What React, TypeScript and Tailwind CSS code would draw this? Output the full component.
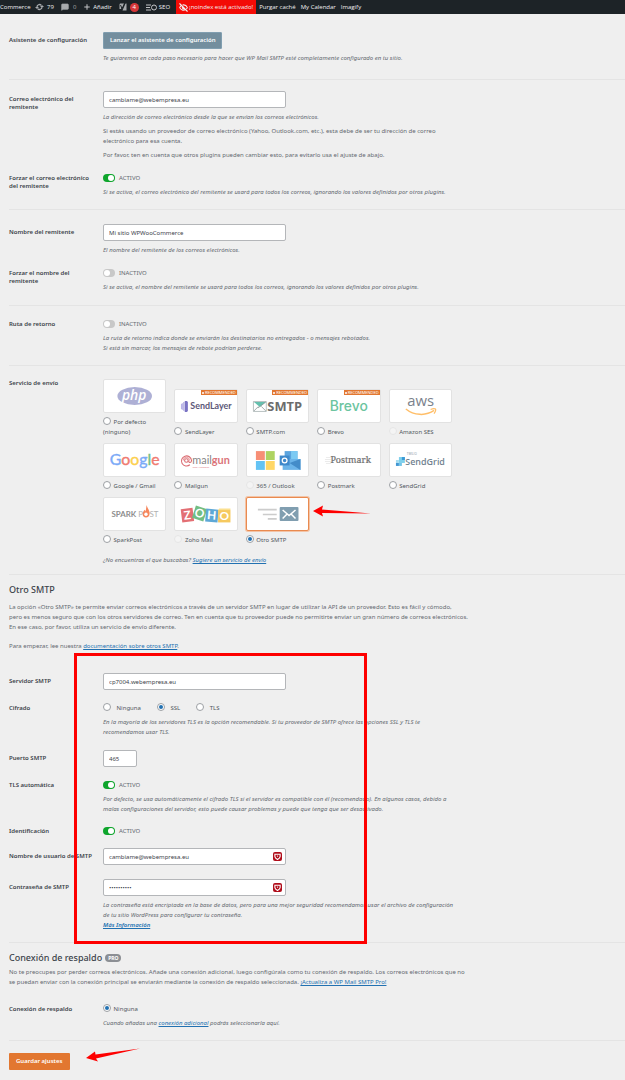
import { ReactNode } from 'react';
import { EyeOff, MessageSquare, Plus, Shield } from 'lucide-react';

interface RowProps {
  label: string;
  htmlFor?: string;
  className?: string;
  labelClass?: string;
  children: ReactNode;
}

function Row({ label, htmlFor, className = '', labelClass = '', children }: RowProps) {
  const text = `block max-w-[90px] font-semibold leading-[8px] text-[#3c434a] ${labelClass}`;

  return (
    <div className={`grid grid-cols-[94px_1fr] ${className}`}>
      <div>
        {htmlFor ? (
          <label htmlFor={htmlFor} className={text}>
            {label}
          </label>
        ) : (
          <span className={text}>{label}</span>
        )}
      </div>
      <div className="min-w-0">{children}</div>
    </div>
  );
}

function Desc({ children, className = 'mt-1' }: { children: ReactNode; className?: string }) {
  return <p className={`italic leading-[10px] text-[#646970] ${className}`}>{children}</p>;
}

function Link({ children }: { children: ReactNode }) {
  return (
    <a href="#" className="text-[#2271b1] underline">
      {children}
    </a>
  );
}

interface FieldProps {
  id: string;
  value: string;
  type?: string;
  width?: string;
  shield?: boolean;
}

function Field({ id, value, type = 'text', width = 'w-[183px]', shield }: FieldProps) {
  return (
    <div className={`relative ${width}`}>
      <input
        id={id}
        type={type}
        defaultValue={value}
        className="block h-[17px] w-full rounded-[2px] border border-[#b4b6b9] bg-white px-[5px] text-[#3c434a] outline-none"
      />
      {shield && (
        <span className="absolute right-1 top-1 flex size-[9px] items-center justify-center rounded-[2px] bg-[#b00d1b] text-white">
          <svg viewBox="0 0 16 16" className="size-[7px]" aria-hidden="true">
            <path d="M2 3h12v5c0 3-2.500 5-6 7-3.500-2-6-4-6-7z" fill="none" stroke="currentColor" strokeWidth="2.500" />
            <circle cx="8" cy="7" r="1.500" fill="currentColor" />
          </svg>
        </span>
      )}
    </div>
  );
}

function Toggle({ id, on }: { id: string; on?: boolean }) {
  return (
    <div className="flex h-2 items-center gap-1">
      <input
        id={id}
        type="checkbox"
        role="switch"
        defaultChecked={on}
        className="h-2 w-[12px] shrink-0 appearance-none rounded-full bg-[#c8c8c8] p-px before:block before:size-[6px] before:rounded-full before:bg-white checked:bg-[#0ea52c] checked:before:ml-[4px]"
      />
      <label htmlFor={id} className="leading-[8px] text-[#646970]">
        {on ? 'ACTIVO' : 'INACTIVO'}
      </label>
    </div>
  );
}

interface RadioProps {
  name: string;
  label: string;
  checked?: boolean;
  disabled?: boolean;
  inputClass?: string;
}

function Radio({ name, label, checked, disabled, inputClass = 'mr-px' }: RadioProps) {
  return (
    <label className="leading-[10px] text-[#50575e]">
      <input
        type="radio"
        name={name}
        defaultChecked={checked}
        disabled={disabled}
        className={`inline-block size-2 appearance-none rounded-full border border-[#9da0a4] bg-white p-px align-[-1px] before:block before:size-1 before:rounded-full checked:before:bg-[#2271b1] disabled:border-[#e6e6e6] disabled:bg-[#f4f4f4] ${inputClass}`}
      />{' '}
      {label}
    </label>
  );
}

const logos: Record<string, ReactNode> = {
  php: (
    <>
      <ellipse cx="31" cy="16" rx="17.5" ry="9" fill="#aeb0d5" />
      <text x="30.500" y="20" textAnchor="middle" fontSize="14" fontWeight="600" fontStyle="italic" fill="#fff" fontFamily="Open Sans, sans-serif">
        php
      </text>
    </>
  ),
  sendlayer: (
    <>
      <path d="M6 14l2-1v7l-2-1z" fill="#b9b5e8" />
      <path d="M8.500 12.500l1-1v10l-1-1z" fill="#8f89d4" />
      <path d="M10 11h2l1 1v9l-1 1h-2z" fill="#7a73c4" />
      <text x="15.500" y="19.500" fontSize="9" fontWeight="700" fill="#5d5878" fontFamily="Lato, sans-serif">
        SendLayer
      </text>
    </>
  ),
  smtp: (
    <>
      <path d="M6.500 11.500h13v10h-13z" fill="#fff" stroke="#9aa5a5" strokeWidth=".7" />
      <path d="M7 12h12l-6 5z" fill="#65c0ae" />
      <path d="M7 21l4.500-4.500M19 21l-4.500-4.500M19 12l-8 6" fill="none" stroke="#8b9797" strokeWidth=".8" />
      <text x="20.500" y="21" fontSize="13" fontWeight="700" fill="#6c6c6c" fontFamily="Open Sans, sans-serif">
        SMTP
      </text>
    </>
  ),
  brevo: (
    <text x="31" y="21" textAnchor="middle" fontSize="14" fontWeight="500" fill="#6cc4a0" fontFamily="Inter, sans-serif">
      Brevo
    </text>
  ),
  aws: (
    <>
      <text x="31" y="16.500" textAnchor="middle" fontSize="15" fontWeight="500" fill="#7b828c" fontFamily="Open Sans, sans-serif">
        aws
      </text>
      <path d="M16 19c8 6.500 20 7.500 28.500 1.500" fill="none" stroke="#ffbe68" strokeWidth="1.500" />
      <path d="M41 19.500c2-.9 4.200-1 5-.4.4 1-.3 3-1.600 4.500" fill="none" stroke="#ffbe68" strokeWidth="1.200" />
    </>
  ),
  google: (
    <text x="31" y="21" textAnchor="middle" fontSize="16" fontWeight="400" strokeWidth=".4" fontFamily="Lato, sans-serif">
      <tspan fill="#7baaf7" stroke="#7baaf7">G</tspan>
      <tspan fill="#f07b72" stroke="#f07b72">o</tspan>
      <tspan fill="#fcd04f" stroke="#fcd04f">o</tspan>
      <tspan fill="#7baaf7" stroke="#7baaf7">g</tspan>
      <tspan fill="#71c287" stroke="#71c287">l</tspan>
      <tspan fill="#f07b72" stroke="#f07b72">e</tspan>
    </text>
  ),
  mailgun: (
    <>
      <circle cx="11.500" cy="16.500" r="1.800" fill="none" stroke="#db6b71" strokeWidth="1.100" />
      <path d="M15 20.800a5.100 5.100 0 1 1 1.700-4.300c0 2.600-2.900 2.600-2.900.2" fill="none" stroke="#db6b71" strokeWidth="1.100" />
      <path d="M8.300 16.500a3.200 3.200 0 0 1 6.400 0" fill="none" stroke="#db6b71" strokeWidth=".7" />
      <text x="17.500" y="20" fontSize="11" fill="#858585" fontFamily="Lato, sans-serif">
        mail<tspan fontWeight="700" fill="#db7479">gun</tspan>
      </text>
      <text x="18" y="24.500" fontSize="2" fill="#db6b71" fontFamily="Open Sans, sans-serif">
        Email Automation
      </text>
    </>
  ),
  outlook: (
    <>
      <path d="M9 7h9v9H9z" fill="#f78f76" />
      <path d="M19 7h9v9h-9z" fill="#aed361" />
      <path d="M9 17h9v9H9z" fill="#64c3f4" />
      <path d="M19 17h9v9h-9z" fill="#ffd766" />
      <path d="M38 7h13v9H38z" fill="#5ba4de" />
      <path d="M44.500 7H51v9h-6.500z" fill="#7ccaf3" />
      <path d="M36 15h18v11H36z" fill="#6bb4e9" />
      <path d="M54 15v11L43 19z" fill="#438cc9" />
      <path d="M33 11.500h10v10H33z" fill="#3f89cb" />
      <circle cx="38" cy="16.500" r="2.400" fill="none" stroke="#fff" strokeWidth="1.300" />
    </>
  ),
  postmark: (
    <>
      <path d="M8 13.500h5M7 15.500h6M7 17.500h6M8 19.500h5" stroke="#e6e6e6" strokeWidth=".8" />
      <text x="12.500" y="19.500" fontSize="9" fill="#6f6f6f" stroke="#6f6f6f" strokeWidth=".2" fontFamily="Noto Serif, DejaVu Serif, Liberation Serif, serif">
        Postmark
      </text>
    </>
  ),
  sendgrid: (
    <>
      <path d="M9 13h6v6H9z" fill="#7fd0ec" />
      <path d="M12 13h3v3h-3z" fill="#3b9ad6" />
      <path d="M6 16h3v3H6z" fill="#a6dcef" />
      <path d="M6 19h3v3H6z" fill="#4196d3" />
      <path d="M9 19h3v3H9z" fill="#73c4e8" />
      <text x="17" y="10.500" fontSize="3" fill="#84919c" fontFamily="Open Sans, sans-serif">
        TWILIO
      </text>
      <text x="15.500" y="21.500" fontSize="9" fontWeight="600" fill="#71828f" fontFamily="Open Sans, sans-serif">
        SendGrid
      </text>
    </>
  ),
  sparkpost: (
    <>
      <text x="7.500" y="19.500" fontSize="8" fontWeight="700" fill="#8d8d8d" fontFamily="Lato, sans-serif">
        SPARK
      </text>
      <text x="34.500" y="19.500" fontSize="8" fill="#b0b0b0" fontFamily="Lato, sans-serif">
        P
      </text>
      <text x="46" y="19.500" fontSize="8" fill="#b0b0b0" fontFamily="Lato, sans-serif">
        ST
      </text>
      <path d="M43 7c.5 2.500 2.500 4.500 3 7.500.4 3-1.200 5-3.600 5s-3.800-2-3.300-4.500c.4-1.600 1.400-2 1.700-3.300.7.500.9 1 1 1.700.9-2 .8-4.400 1.200-6.400z" fill="#f6875c" />
      <circle cx="42.400" cy="16.300" r="1.700" fill="#fff" />
    </>
  ),
  zoho: (
    <>
      <g transform="rotate(-7 12 17)">
        <path d="M6.500 10.500H18.500v13.500H6.500z" fill="#e36f74" />
        <text x="12.500" y="21.500" textAnchor="middle" fontSize="12" fontWeight="700" fill="#fff" fontFamily="Lato, sans-serif">Z</text>
      </g>
      <g transform="rotate(18 25 15)">
        <path d="M19 9H31v13H19z" fill="#72bd83" />
        <text x="25" y="19.500" textAnchor="middle" fontSize="12" fontWeight="700" fill="#fff" fontFamily="Lato, sans-serif">O</text>
      </g>
      <g transform="rotate(5 37 17)">
        <path d="M31 11H43.500v13H31z" fill="#5ea8d6" />
        <text x="37" y="21.500" textAnchor="middle" fontSize="12" fontWeight="700" fill="#fff" fontFamily="Lato, sans-serif">H</text>
      </g>
      <path d="M43.500 12H56V24.500H43.500z" fill="#f6c95f" />
      <path d="M43.500 12l1.200-1.500H56V12z" fill="#fbe08f" />
      <text x="49.700" y="22.500" textAnchor="middle" fontSize="12" fontWeight="700" fill="#fff" fontFamily="Lato, sans-serif">O</text>
    </>
  ),
  other: (
    <>
      <path d="M11 11.500h19M16 16.500h14M21 21h9" stroke="#cccccc" strokeWidth="1.700" />
      <rect x="33" y="9" width="19" height="14" rx="1" fill="#809eb0" />
      <path d="M36 12l6.500 5.500L49 12M36 20.500l4.500-4.500M49 20.500L44.500 16" fill="none" stroke="#fff" strokeWidth="1.500" />
    </>
  ),
};

const mailers = [
  { logo: 'php', label: 'Por defecto (ninguno)' },
  { logo: 'sendlayer', label: 'SendLayer', recommended: true },
  { logo: 'smtp', label: 'SMTP.com', recommended: true },
  { logo: 'brevo', label: 'Brevo', recommended: true },
  { logo: 'aws', label: 'Amazon SES', disabled: true },
  { logo: 'google', label: 'Google / Gmail' },
  { logo: 'mailgun', label: 'Mailgun' },
  { logo: 'outlook', label: '365 / Outlook', disabled: true },
  { logo: 'postmark', label: 'Postmark' },
  { logo: 'sendgrid', label: 'SendGrid' },
  { logo: 'sparkpost', label: 'SparkPost' },
  { logo: 'zoho', label: 'Zoho Mail', disabled: true },
  { logo: 'other', label: 'Otro SMTP', selected: true },
];

function MailerGrid() {
  return (
    <div className="grid w-[349px] grid-cols-5 items-end gap-x-2 gap-y-[6px]">
      {mailers.map((mailer) => (
        <div key={mailer.logo} className="flex flex-col gap-1">
          <div
            className={`relative h-[34px] rounded-[2px] border bg-white ${
              mailer.selected ? 'border-[#e98a50] ring-1 ring-[#f3c4a6]' : 'border-[#e2e2e2]'
            }`}
          >
            <svg viewBox="0 0 62 32" className="size-full" aria-hidden="true">
              {logos[mailer.logo]}
            </svg>
            {mailer.recommended && (
              <span className="absolute right-0 top-0 flex h-[5px] items-center gap-px bg-[#e27730] px-px text-[4px] leading-[5px] text-white">
                <span className="size-[2px] rounded-full bg-white" />
                RECOMMENDED
              </span>
            )}
          </div>
          <Radio name="mailer" label={mailer.label} checked={mailer.selected} disabled={mailer.disabled} />
        </div>
      ))}
    </div>
  );
}

function AdminBar() {
  return (
    <nav className="flex h-[14px] items-center overflow-hidden whitespace-nowrap bg-[#1d2327] font-['Open_Sans','Noto_Sans',sans-serif] leading-[14px] text-[#f0f0f1]">
      <a href="#" className="w-[28px]">Commerce</a>
      <a href="#" className="ml-[7px] flex items-center gap-[3px]">
        <svg viewBox="0 0 18 16" className="h-2 w-[9px]" aria-hidden="true">
          <path d="M4 8a5 5 0 0 1 8.500-3.500M14 8a5 5 0 0 1-8.500 3.500" fill="none" stroke="#a7aaad" strokeWidth="2.500" />
          <path d="M0 8h8L4 12zM10 8h8l-4-4z" fill="#a7aaad" />
        </svg>
        79
      </a>
      <a href="#" className="ml-[7px] flex items-center gap-1 text-[#a7aaad]">
        <MessageSquare size={8} fill="currentColor" />
        0
      </a>
      <a href="#" className="ml-[7px] flex items-center gap-[2px]">
        <Plus size={8} strokeWidth={3} className="text-[#c3c4c7]" />
        Añadir
      </a>
      <a href="#" className="ml-[7px] flex items-center gap-[3px]">
        <svg viewBox="0 0 16 16" className="size-2" aria-label="Yoast">
          <path d="M2 1h8L6 12H1V3zM13 1h2v14H7z" fill="#a7aaad" />
          <path d="M3 4l3 7 6-11M6 10l-2 4" fill="none" stroke="#1d2327" strokeWidth="2" />
        </svg>
        <span className="flex size-[9px] items-center justify-center rounded-full bg-[#d63638] text-white">4</span>
      </a>
      <a href="#" className="ml-[7px] flex items-center gap-[2px]">
        <svg viewBox="0 0 22 14" className="h-[7px] w-[11px]" aria-hidden="true">
          <path d="M0 2h10M0 7h8M0 12h10" stroke="#c3c4c7" strokeWidth="2" />
          <circle cx="16" cy="7" r="5" fill="none" stroke="#c3c4c7" strokeWidth="2" />
        </svg>
        SEO
      </a>
      <a href="#" className="ml-[6px] flex h-full items-center gap-px bg-[#f30b06] px-[3px]">
        <EyeOff size={9} strokeWidth={3} />
        ¡noindex está activado!
      </a>
      <a href="#" className="ml-[3px]">Purgar caché</a>
      <a href="#" className="ml-[5px]">My Calendar</a>
      <a href="#" className="ml-[5px]">Imagify</a>
    </nav>
  );
}

export default function App() {
  return (
    <div className="relative min-h-screen overflow-hidden bg-[#efefef] font-['Noto_Sans','Open_Sans',sans-serif] text-[6px] text-[#50575e]">
      <AdminBar />

      <form className="pl-[9px] [&>section]:border-b [&>section]:border-[#e4e4e4]">
        <section className="pb-4 pt-[18px]">
          <Row label="Asistente de configuración" labelClass="pt-1">
            <button type="button" className="h-[17px] rounded-[1px] border border-[#809eb0] bg-[#738e9e] px-[6px] font-semibold text-white">
              Lanzar el asistente de configuración
            </button>
            <Desc>
              Te guiaremos en cada paso necesario para hacer que WP Mail SMTP esté completamente configurado en tu sitio.
            </Desc>
          </Row>
        </section>

        <section className="pb-3 pt-[11px]">
          <Row label="Correo electrónico del remitente" htmlFor="from-email" labelClass="max-w-[75px] pt-1">
            <Field id="from-email" value="cambiame@webempresa.eu" />
            <Desc>La dirección de correo electrónico desde la que se envían los correos electrónicos.</Desc>
            <p className="mt-1 leading-[10px] text-[#646970]">
              Si estás usando un proveedor de correo electrónico (Yahoo, Outlook.com, etc.), esta debe de ser tu dirección de correo
              <br />
              electrónico para esa cuenta.
            </p>
            <p className="mt-1 leading-[10px] text-[#646970]">
              Por favor, ten en cuenta que otros plugins pueden cambiar esto, para evitarlo usa el ajuste de abajo.
            </p>
          </Row>
          <Row label="Forzar el correo electrónico del remitente" htmlFor="force-email" className="mt-[14px]">
            <Toggle id="force-email" on />
            <Desc className="mt-[5px]">
              Si se activa, el correo electrónico del remitente se usará para todos los correos, ignorando los valores definidos por otros plugins.
            </Desc>
          </Row>
        </section>

        <section className="pb-[13px] pt-[14px]">
          <Row label="Nombre del remitente" htmlFor="from-name" labelClass="pt-1">
            <Field id="from-name" value="Mi sitio WPWooCommerce" />
            <Desc>El nombre del remitente de los correos electrónicos.</Desc>
          </Row>
          <Row label="Forzar el nombre del remitente" htmlFor="force-name" className="mt-[14px]" labelClass="max-w-[75px]">
            <Toggle id="force-name" />
            <Desc className="mt-[5px]">
              Si se activa, el nombre del remitente se usará para todos los correos, ignorando los valores definidos por otros plugins.
            </Desc>
          </Row>
        </section>

        <section className="pb-3 pt-[14px]">
          <Row label="Ruta de retorno" htmlFor="return-path">
            <Toggle id="return-path" />
            <Desc className="mt-[5px]">
              La ruta de retorno indica donde se enviarán los destinatarios no entregados - o mensajes rebotados.
              <br />
              Si está sin marcar, los mensajes de rebote podrían perderse.
            </Desc>
          </Row>
        </section>

        <section className="pb-[9px] pt-[13px]">
          <Row label="Servicio de envío">
            <MailerGrid />
            <Desc className="mt-[10px]">
              ¿No encuentras el que buscabas? <Link>Sugiere un servicio de envío</Link>
            </Desc>
          </Row>
        </section>

        <section className="pb-3 pt-[9px]">
          <h2 className="text-[9px] font-medium leading-[12px] text-[#3c434a]">Otro SMTP</h2>
          <p className="mt-[6px] leading-[10px] text-[#646970]">
            La opción «Otro SMTP» te permite enviar correos electrónicos a través de un servidor SMTP en lugar de utilizar la API de un proveedor. Esto es fácil y cómodo,
            <br />
            pero es menos seguro que con los otros servidores de correo. Ten en cuenta que tu proveedor puede no permitirte enviar un gran número de correos electrónicos.
            <br />
            En ese caso, por favor, utiliza un servicio de envío diferente.
          </p>
          <p className="mt-[9px] leading-[10px] text-[#646970]">
            Para empezar, lee nuestra <Link>documentación sobre otros SMTP</Link>.
          </p>

          <Row label="Servidor SMTP" htmlFor="host" className="mt-[22px]" labelClass="pt-1">
            <Field id="host" value="cp7004.webempresa.eu" />
          </Row>
          <Row label="Cifrado" className="mt-[14px]">
            <div className="flex h-2 items-center gap-4">
              <Radio name="encryption" label="Ninguna" inputClass="mr-1" />
              <Radio name="encryption" label="SSL" inputClass="mr-1" checked />
              <Radio name="encryption" label="TLS" inputClass="mr-1" />
            </div>
            <Desc className="mt-[5px]">
              En la mayoría de los servidores TLS es la opción recomendable. Si tu proveedor de SMTP ofrece las opciones SSL y TLS te
              <br />
              recomendamos usar TLS.
            </Desc>
          </Row>
          <Row label="Puerto SMTP" htmlFor="port" className="mt-[13px]" labelClass="pt-1">
            <Field id="port" value="465" width="w-[34px]" />
          </Row>
          <Row label="TLS automática" htmlFor="auto-tls" className="mt-[14px]">
            <Toggle id="auto-tls" on />
            <Desc className="mt-[5px]">
              Por defecto, se usa automáticamente el cifrado TLS si el servidor es compatible con él (recomendado). En algunos casos, debido a
              <br />
              malas configuraciones del servidor, esto puede causar problemas y puede que tenga que ser desactivado.
            </Desc>
          </Row>
          <Row label="Identificación" htmlFor="auth" className="mt-[13px]">
            <Toggle id="auth" on />
          </Row>
          <Row label="Nombre de usuario de SMTP" htmlFor="user" className="mt-[13px]" labelClass="whitespace-nowrap pt-1">
            <Field id="user" value="cambiame@webempresa.eu" shield />
          </Row>
          <Row label="Contraseña de SMTP" htmlFor="password" className="mt-[14px]" labelClass="pt-1">
            <Field id="password" type="password" value="contrasena" shield />
            <Desc>
              La contraseña está encriptada en la base de datos, pero para una mejor seguridad recomendamos usar el archivo de configuración
              <br />
              de tu sitio WordPress para configurar tu contraseña.
              <br />
              <span className="font-semibold">
                <Link>Más Información</Link>
              </span>
            </Desc>
          </Row>
        </section>

        <section className="pb-3 pt-[9px]">
          <div className="flex items-center gap-[3px]">
            <h2 className="text-[9px] font-medium leading-[12px] text-[#3c434a]">Conexión de respaldo</h2>
            <span className="rounded-full bg-[#8c8f94] px-[3px] text-[5px] font-bold leading-[8px] text-white">PRO</span>
          </div>
          <p className="mt-[3px] leading-[10px] text-[#646970]">
            No te preocupes por perder correos electrónicos. Añade una conexión adicional, luego configúrala como tu conexión de respaldo. Los correos electrónicos que no
            <br />
            se puedan enviar con la conexión principal se enviarán mediante la conexión de respaldo seleccionada. <Link>¡Actualiza a WP Mail SMTP Pro!</Link>
          </p>
          <Row label="Conexión de respaldo" className="mt-[18px]">
            <div className="flex h-2 items-center">
              <Radio name="backup" label="Ninguna" checked />
            </div>
            <Desc className="mt-[5px]">
              Cuando añadas una <Link>conexión adicional</Link> podrás seleccionarla aquí.
            </Desc>
          </Row>
        </section>

        <button type="submit" className="my-3 h-[17px] rounded-[1px] bg-[#e27730] px-[7px] font-semibold text-white">
          Guardar ajustes
        </button>
      </form>

      {/* tutorial marks drawn over the settings page */}
      <div className="pointer-events-none absolute left-[74px] top-[653px] h-[291px] w-[293px] border-[3px] border-[#fe0000]" />
      <svg viewBox="0 0 58 12" className="pointer-events-none absolute left-[313px] top-[505px] h-[12px] w-[58px]" aria-hidden="true">
        <path d="M0 6L10 .5 9 4.500 58 8.500 9 8 10 11.500z" fill="#fe0000" />
      </svg>
      <svg viewBox="0 0 54 14" className="pointer-events-none absolute left-[86px] top-[1048px] h-[14px] w-[54px]" aria-hidden="true">
        <path d="M0 10L9 3.500 9.500 6.500 54 .5 10 10.500 12 13.500z" fill="#fe0000" />
      </svg>
    </div>
  );
}
